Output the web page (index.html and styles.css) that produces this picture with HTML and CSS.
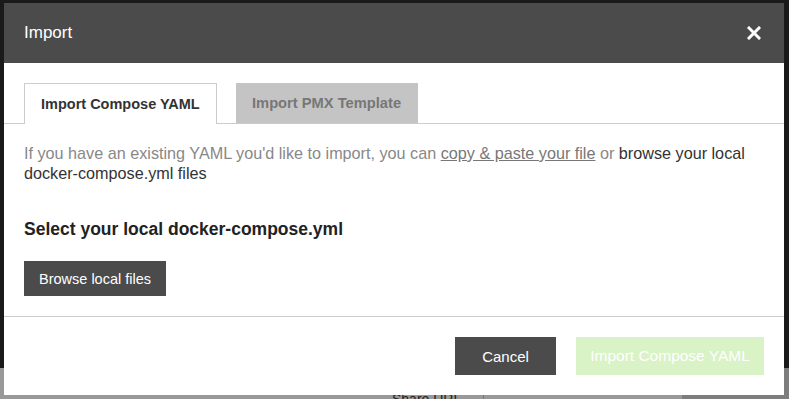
FILE: index.html
```html
<!DOCTYPE html>
<html>
<head>
<meta charset="UTF-8">
<title>Import</title>
<link rel="stylesheet" href="styles.css">
</head>
<body>
<div class="page">
  <div class="page-top"></div>
  <div class="page-bottom">
    <span class="share">Share URL</span>
    <span class="sep"></span>
    <span class="dark-block"></span>
  </div>
</div>

<div class="modal">
  <div class="modal-header">
    <h3>Import</h3>
    <a class="close" href="#">
      <svg width="14" height="14" viewBox="0 0 14 14"><path d="M2 2 L12 12 M12 2 L2 12" stroke="#fff" stroke-width="3" stroke-linecap="square"/></svg>
    </a>
  </div>

  <ul class="tabs">
    <li class="tab active">Import Compose YAML</li>
    <li class="tab">Import PMX Template</li>
  </ul>

  <div class="modal-body">
    <p class="intro">If you have an existing YAML you'd like to import, you can <a href="#">copy &amp; paste your file</a> or <span class="strong">browse your local docker-compose.yml files</span></p>
    <h4>Select your local docker-compose.yml</h4>
    <a class="btn" href="#">Browse local files</a>
  </div>

  <div class="modal-footer">
    <a class="btn btn-cancel" href="#">Cancel</a>
    <a class="btn btn-import" href="#">Import Compose YAML</a>
  </div>
</div>
</body>
</html>
```

FILE: styles.css
```css
html, body { margin: 0; padding: 0; }
body { font-family: "Liberation Sans", Arial, sans-serif; width: 789px; height: 399px; overflow: hidden; position: relative; background: #1a1a1a; }

.page { display: flex; flex-direction: column; height: 399px; }
.page-top { height: 368px; background: #1a1a1a; }
.page-bottom { flex: 1; background: #999; display: flex; align-items: flex-end; }
.page-bottom .share { margin-left: 392px; font-size: 14px; color: #222; line-height: 1; margin-bottom: -7px; }
.page-bottom .sep { width: 1px; height: 22px; background: #777; margin-left: 22px; }
.page-bottom .dark-block { width: 107px; height: 31px; background: #7d7d7d; margin-left: auto; }

.modal { position: absolute; top: 3px; left: 4px; width: 780px; height: 392px; background: #fff; }

.modal-header { height: 60px; background: #4b4b4b; display: flex; align-items: center; justify-content: space-between; padding: 0 23px 0 20px; }
.modal-header h3 { margin: 0; font-size: 17px; font-weight: normal; color: #fff; }
.close { display: flex; }

.tabs { list-style: none; margin: 20px 0 0; padding: 0 0 0 20px; display: flex; gap: 19px; border-bottom: 1px solid #ccc; }
.tab { height: 40px; display: flex; align-items: center; padding: 0 16px; font-size: 14.7px; font-weight: bold; color: #777; background: #c4c4c4; box-sizing: border-box; }
.tab.active { background: #fff; color: #333; border: 1px solid #ccc; border-bottom: none; margin-bottom: -1px; height: 41px; width: 193px; font-size: 14.5px; }
.tab:nth-child(2) { width: 182px; }

.modal-body { padding: 19px 20px 20px; border-bottom: 1px solid #ccc; }
.intro { margin: 0; font-size: 16.2px; line-height: 20px; color: #888; }
.intro a { color: #777; }
.intro .strong { color: #333; }
.modal-body h4 { margin: 36px 0 21px; font-size: 17.5px; color: #222; }

.btn { display: inline-flex; align-items: center; justify-content: center; text-decoration: none; font-size: 14.5px; color: #fff; background: #4b4b4b; height: 35px; padding: 0 15px; }

.modal-footer { display: flex; justify-content: flex-end; gap: 20px; padding: 20px 20px 0; }
.btn-cancel { width: 101px; height: 38px; padding: 0; font-size: 15px; }
.btn-import { width: 188px; height: 38px; padding: 0; font-size: 15.5px; background: #d9f2c6; }
```
